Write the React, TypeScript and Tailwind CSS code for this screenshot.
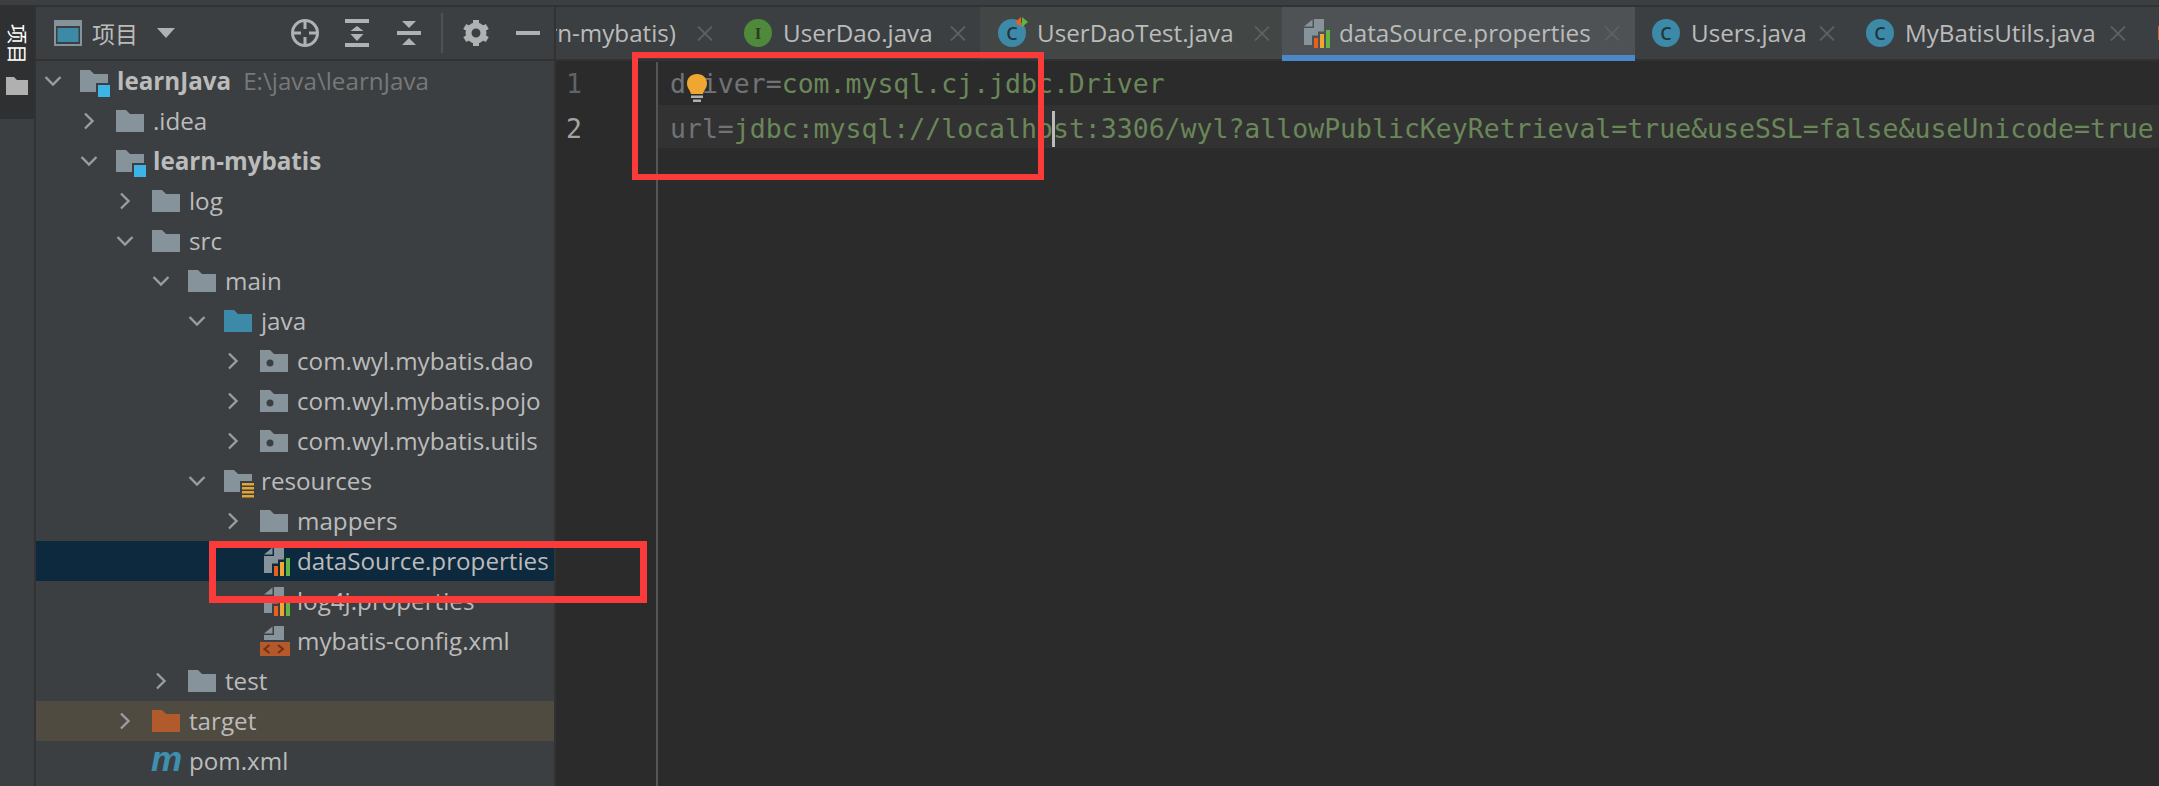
import type { ReactNode } from "react";

const FOLDER = "0,0 10,0 14,4 28,4 28,22 0,22";

function Folder({ color = "#87939a", dot }: { color?: string; dot?: boolean }) {
    return (
        <svg width="28" height="22" viewBox="0 0 28 22">
            <polygon points={FOLDER} fill={color} />
            {dot && <circle cx="10" cy="13" r="3.5" fill="#3c3f41" />}
        </svg>
    );
}

function ModuleFolder() {
    return (
        <svg width="31" height="28" viewBox="0 0 31 28" className="mt-1.5">
            <polygon points="0,0 10,0 14,4 28,4 28,13 16,13 16,22 0,22" fill="#87939a" />
            <rect x="18" y="15" width="12" height="12" fill="#3cb4e6" />
        </svg>
    );
}

function ResourceFolder() {
    return (
        <svg width="31" height="29" viewBox="0 0 31 29" className="mt-[7px]">
            <polygon points="0,0 10,0 14,4 28,4 28,11 16,11 16,22 0,22" fill="#87939a" />
            <rect x="18" y="13" width="12" height="2.5" fill="#e0a437" />
            <rect x="18" y="17" width="12" height="2.5" fill="#e0a437" />
            <rect x="18" y="21" width="12" height="2.5" fill="#e0a437" />
            <rect x="18" y="25" width="12" height="2.5" fill="#e0a437" />
        </svg>
    );
}

function PropsIcon() {
    return (
        <svg width="26" height="29" viewBox="0 0 26 29">
            <polygon points="0,7.5 8.5,0.5 8.5,7.5" fill="#87939a" />
            <polygon points="0,9 10,9 10,0 20,0 20,12.5 14,12.5 14,16.5 8,16.5 8,26 0,26" fill="#87939a" />
            <rect x="10" y="19" width="4" height="10" fill="#e8601c" />
            <rect x="16" y="15" width="4" height="14" fill="#f0a732" />
            <rect x="22" y="11" width="4" height="18" fill="#62b543" />
        </svg>
    );
}

function XmlIcon() {
    return (
        <svg width="30" height="30" viewBox="0 0 30 30">
            <polygon points="4,7.5 12.5,0.5 12.5,7.5" fill="#87939a" />
            <polygon points="4,9 14,9 14,0 24,0 24,14 4,14" fill="#87939a" />
            <rect x="0" y="16" width="30" height="14" fill="#b5582a" />
            <path d="M9.5 19 L4.5 23 L9.5 27 M18 19 L23 23 L18 27" fill="none" stroke="#6d3218" strokeWidth="2" />
        </svg>
    );
}

function Chevron({ open }: { open: boolean }) {
    return (
        <svg width="18" height="18" viewBox="0 0 18 18" className="block">
            <path
                d={open ? "M1.5 5 L9 12.5 L16.5 5" : "M5 1.5 L12.5 9 L5 16.5"}
                fill="none"
                stroke="#9a9da0"
                strokeWidth="2.4"
            />
        </svg>
    );
}

type TreeItem = {
    depth: number;
    label: string;
    icon: ReactNode;
    open?: boolean;
    bold?: boolean;
    hint?: string;
    rowClass?: string;
};

const tree: TreeItem[] = [
    { depth: 0, label: "learnJava", icon: <ModuleFolder />, open: true, bold: true, hint: "E:\\java\\learnJava" },
    { depth: 1, label: ".idea", icon: <Folder />, open: false },
    { depth: 1, label: "learn-mybatis", icon: <ModuleFolder />, open: true, bold: true },
    { depth: 2, label: "log", icon: <Folder />, open: false },
    { depth: 2, label: "src", icon: <Folder />, open: true },
    { depth: 3, label: "main", icon: <Folder />, open: true },
    { depth: 4, label: "java", icon: <Folder color="#3d8aa8" />, open: true },
    { depth: 5, label: "com.wyl.mybatis.dao", icon: <Folder dot />, open: false },
    { depth: 5, label: "com.wyl.mybatis.pojo", icon: <Folder dot />, open: false },
    { depth: 5, label: "com.wyl.mybatis.utils", icon: <Folder dot />, open: false },
    { depth: 4, label: "resources", icon: <ResourceFolder />, open: true },
    { depth: 5, label: "mappers", icon: <Folder />, open: false },
    { depth: 5, label: "dataSource.properties", icon: <span className="block ml-1"><PropsIcon /></span>, rowClass: "bg-[#0d293e]" },
    { depth: 5, label: "log4j.properties", icon: <span className="block ml-1"><PropsIcon /></span> },
    { depth: 5, label: "mybatis-config.xml", icon: <XmlIcon /> },
    { depth: 3, label: "test", icon: <Folder />, open: false },
    { depth: 2, label: "target", icon: <Folder color="#b15a2c" />, open: false, rowClass: "bg-[#4f4b41]" },
    {
        depth: 2,
        label: "pom.xml",
        icon: <span className="block -ml-px font-['Liberation_Sans',sans-serif] font-bold italic text-[35px] leading-none text-[#3e8fb0] -mt-1.5">m</span>,
    },
];

function TreeRow({ item }: { item: TreeItem }) {
    return (
        <div
            className={`h-10 flex items-center shrink-0 ${item.rowClass ?? ""}`}
            style={{ paddingLeft: 8 + item.depth * 36 }}
        >
            <div className="w-9 shrink-0">
                {item.open !== undefined && <Chevron open={item.open} />}
            </div>
            <div className="w-[37px] shrink-0 flex items-center h-10">{item.icon}</div>
            <span className={`whitespace-nowrap ${item.bold ? "font-bold" : ""}`}>{item.label}</span>
            {item.hint && <span className="ml-3 whitespace-nowrap text-[#787878]">{item.hint}</span>}
        </div>
    );
}

function HeaderIcons() {
    return (
        <div className="flex items-center ml-auto pr-3.5">
            <svg width="28" height="28" viewBox="0 0 28 28" className="block">
                <circle cx="14" cy="14" r="12.5" fill="none" stroke="#afb1b3" strokeWidth="3" />
                <path d="M14 2 V10 M14 18 V26 M2 14 H10 M18 14 H26" stroke="#afb1b3" strokeWidth="3" />
            </svg>
            <svg width="24" height="28" viewBox="0 0 24 28" className="block ml-[26px]">
                <rect x="0" y="0" width="24" height="4" fill="#afb1b3" />
                <polygon points="12,7 18.5,12 5.5,12" fill="#afb1b3" />
                <polygon points="12,22 18.5,15 5.5,15" fill="#afb1b3" />
                <rect x="0" y="24" width="24" height="4" fill="#afb1b3" />
            </svg>
            <svg width="24" height="24" viewBox="0 0 24 24" className="block ml-7">
                <polygon points="12,7 19,0 5,0" fill="#afb1b3" />
                <rect x="0" y="10" width="24" height="4" fill="#afb1b3" />
                <polygon points="12,17 19,24 5,24" fill="#afb1b3" />
            </svg>
            <div className="w-0.5 h-10 bg-[#4f5254] ml-5" />
            <svg width="26" height="26" viewBox="0 0 26 26" className="block ml-5">
                <circle cx="13" cy="13" r="7.5" fill="none" stroke="#afb1b3" strokeWidth="6" />
                {[0, 60, 120, 180, 240, 300].map((a) => (
                    <rect key={a} x="10" y="0" width="6" height="6" fill="#afb1b3" transform={`rotate(${a} 13 13)`} />
                ))}
            </svg>
            <div className="w-6 h-1 bg-[#afb1b3] ml-[27px]" />
        </div>
    );
}

function Sidebar() {
    return (
        <div className="w-[518px] shrink-0 flex flex-col">
            <div className="h-[52px] shrink-0 flex items-center pl-[18px]">
                <svg width="28" height="26" viewBox="0 0 28 26" className="block">
                    <rect width="28" height="26" fill="#87939a" />
                    <rect x="2" y="6" width="24" height="18" fill="#3c3f41" />
                    <rect x="3.5" y="8" width="21" height="14" fill="#3d8aa8" />
                </svg>
                <span className="ml-2.5 font-['Noto_Sans_CJK_SC',sans-serif] text-[23px] text-[#bbbbbb]">项目</span>
                <svg width="18" height="10" viewBox="0 0 18 10" className="block ml-[19px]">
                    <polygon points="0,0 18,0 9,10" fill="#afb1b3" />
                </svg>
                <HeaderIcons />
            </div>
            <div className="h-0.5 shrink-0 bg-[#323232]" />
            <div className="flex flex-col">
                {tree.map((item) => (
                    <TreeRow key={item.label} item={item} />
                ))}
            </div>
        </div>
    );
}

function Badge({ color, letter, serif }: { color: string; letter: string; serif?: boolean }) {
    return (
        <span
            className={`relative w-7 h-7 rounded-full flex items-center justify-center shrink-0 ${color} ${
                serif ? "font-['Liberation_Serif',serif] font-bold text-[17px] text-[#2d3b26]" : "font-semibold text-[18px] text-[#22343c]"
            } leading-none`}
        >
            {letter}
        </span>
    );
}

function CloseX() {
    return (
        <svg width="16" height="15" viewBox="0 0 16 15" className="block ml-auto shrink-0">
            <path d="M1 0.5 L15 14.5 M15 0.5 L1 14.5" stroke="#5e6163" strokeWidth="1.8" />
        </svg>
    );
}

function Tabs() {
    return (
        <div className="h-[54px] shrink-0 bg-[#323232] flex items-start overflow-hidden">
            <div className="w-[170px] h-[52px] shrink-0 bg-[#3c3f41] flex items-center justify-end pr-[13px] overflow-hidden">
                <span className="whitespace-nowrap">(learn-mybatis)</span>
                <span className="w-[21px] shrink-0" />
                <CloseX />
            </div>
            <div className="w-[254px] h-[52px] shrink-0 bg-[#3c3f41] flex items-center pl-[18px] pr-3.5">
                <Badge color="bg-[#4f8a3a]" letter="I" serif />
                <span className="ml-[11px] whitespace-nowrap">UserDao.java</span>
                <CloseX />
            </div>
            <div className="w-[302px] h-[52px] shrink-0 bg-[#424644] flex items-center pl-[18px] pr-3">
                <span className="relative shrink-0">
                    <Badge color="bg-[#3d8aa8]" letter="C" />
                    <svg width="13" height="10" viewBox="0 0 13 10" className="absolute -top-[2px] left-[17px]">
                        <polygon points="6,0 6,10 0,5" fill="#e8601c" />
                        <polygon points="7,0 7,10 13,5" fill="#62b543" />
                    </svg>
                </span>
                <span className="ml-[11px] whitespace-nowrap">UserDaoTest.java</span>
                <CloseX />
            </div>
            <div className="w-[353px] h-[54px] shrink-0 bg-[#4e5254] border-b-[6px] border-[#4a88c7] flex items-center pl-[22px] pr-[15px] pt-1">
                <PropsIcon />
                <span className="ml-[9px] whitespace-nowrap">dataSource.properties</span>
                <CloseX />
            </div>
            <div className="w-[214px] h-[52px] shrink-0 bg-[#3c3f41] flex items-center pl-[17px] pr-3.5">
                <Badge color="bg-[#3d8aa8]" letter="C" />
                <span className="ml-[11px] whitespace-nowrap">Users.java</span>
                <CloseX />
            </div>
            <div className="w-[291px] h-[52px] shrink-0 bg-[#3c3f41] flex items-center pl-[17px] pr-3.5">
                <Badge color="bg-[#3d8aa8]" letter="C" />
                <span className="ml-[11px] whitespace-nowrap">MyBatisUtils.java</span>
                <CloseX />
            </div>
            <div className="flex-1 h-[52px] bg-[#3c3f41] flex items-center pl-[18px]">
                <div className="w-1 h-3.5 bg-[#c1662c] shrink-0" />
            </div>
        </div>
    );
}

function Editor() {
    return (
        <div className="flex-1 min-w-0 flex flex-col">
            <Tabs />
            <div className="flex-1 bg-[#2b2b2b] flex pt-px font-['DejaVu_Sans_Mono',monospace] text-[26.5px] overflow-hidden">
                <div className="w-[102px] shrink-0 border-r-2 border-[#555555] pl-[10px] flex flex-col">
                    <div className="h-[43px] flex items-center text-[#606366]">1</div>
                    <div className="h-[43px] flex items-center pt-[5px] text-[#a4a3a3]">2</div>
                </div>
                <div className="flex-1 min-w-0 flex flex-col whitespace-nowrap">
                    <div className="relative h-[43px] flex items-center pl-3 text-[#6a8759]">
                        <span className="text-[#6f7378]">driver=</span>com.mysql.cj.jdbc.Driver
                        <svg width="20" height="28" viewBox="0 0 20 28" className="absolute left-[29px] top-[12px]">
                            <path d="M10 0 C4 0 0 4 0 9.5 C0 14 3 16 4 20 H16 C17 16 20 14 20 9.5 C20 4 16 0 10 0 Z" fill="#f0a732" />
                            <rect x="4" y="21.5" width="12" height="2.5" fill="#afb1b3" />
                            <rect x="6" y="25.5" width="8" height="2.5" fill="#afb1b3" />
                        </svg>
                    </div>
                    <div className="h-[43px] flex items-center pl-3 pt-[5px] bg-[#323232] text-[#6a8759]">
                        <span className="text-[#6f7378]">url=</span>
                        <span>jdbc:mysql://localho</span>
                        <span className="relative w-0 h-[36px]">
                            <span className="absolute -left-px top-0 w-[3px] h-[36px] bg-[#bbbbbb]" />
                        </span>
                        <span>st:3306/wyl?allowPublicKeyRetrieval=true&amp;useSSL=false&amp;useUnicode=true</span>
                    </div>
                </div>
            </div>
        </div>
    );
}

export default function App() {
    return (
        <div className="relative w-[2159px] h-[786px] overflow-hidden bg-[#3c3f41] text-[#bbbbbb] font-['Open_Sans',sans-serif] text-[24.2px] flex flex-col">
            <div className="h-[5px] shrink-0" />
            <div className="h-0.5 shrink-0 bg-[#323232]" />
            <div className="flex-1 min-h-0 flex">
                {/* Tool window stripe */}
                <div className="w-[34px] shrink-0">
                    <div className="h-[114px] -mt-0.5 bg-[#2e3032] flex flex-col items-center pt-[19px]">
                        <span className="[writing-mode:vertical-rl] [text-orientation:sideways] font-['Noto_Sans_CJK_SC',sans-serif] text-[20px] leading-none text-white">项目</span>
                        <svg width="22" height="18" viewBox="0 0 22 18" className="block mt-[13px]">
                            <polygon points="0,0 8,0 11,3 22,3 22,18 0,18" fill="#b0b0b0" />
                        </svg>
                    </div>
                </div>
                <div className="w-0.5 shrink-0 bg-[#323232]" />
                <Sidebar />
                <div className="w-0.5 shrink-0 bg-[#323232]" />
                <Editor />
            </div>
            {/* Red annotation boxes */}
            <div className="absolute left-[632px] top-[52px] w-[412px] h-[128px] border-[6px] border-[#fb3a3a]" />
            <div className="absolute left-[209px] top-[541px] w-[438px] h-[62px] border-[7px] border-[#fb3a3a]" />
        </div>
    );
}
